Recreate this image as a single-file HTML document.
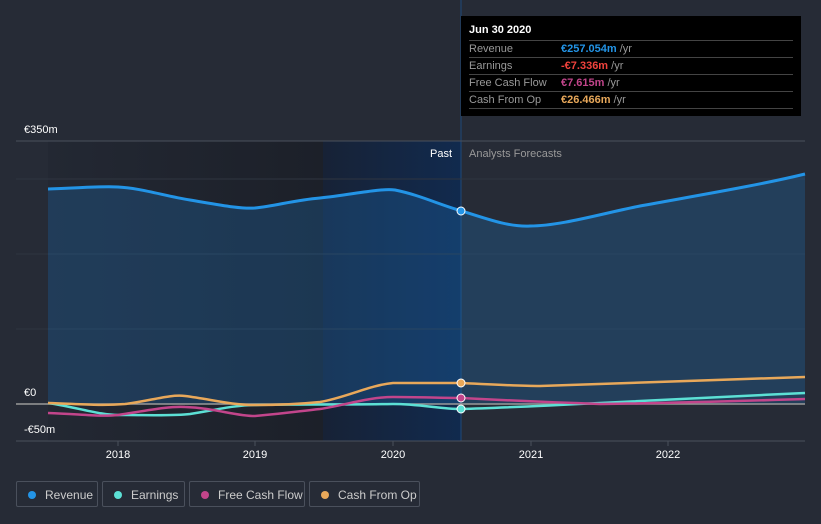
<!DOCTYPE html>
<html><head><meta charset="utf-8"><style>
body{margin:0;width:821px;height:524px;background:#262b36;font-family:"Liberation Sans",sans-serif;overflow:hidden;position:relative}
.tt{position:absolute;left:461px;top:16px;width:340px;height:100px;background:#000;color:#fff;font-size:11px}
.tt .h{position:absolute;left:8px;top:8px;font-weight:bold}
.row{position:absolute;left:8px;width:324px;border-top:1px solid #444;height:16px;line-height:17px;color:#999}
.row span{position:absolute;left:92px}
.leg{position:absolute;top:481px;height:26px;border:1px solid #4a505c;border-radius:2px;color:#ccc;font-size:12px;line-height:26px;box-sizing:border-box}
.leg i{position:absolute;left:11px;top:9px;width:8px;height:8px;border-radius:50%}
.leg b{font-weight:normal;position:absolute;left:28px}
</style></head><body>
<svg width="821" height="524" style="position:absolute;left:0;top:0">
<defs><linearGradient id="pg" x1="0" x2="1"><stop offset="0" stop-color="#232833"/><stop offset="1" stop-color="#1c2029"/></linearGradient>
<linearGradient id="bg2" x1="0" x2="1"><stop offset="0" stop-color="#172236"/><stop offset="1" stop-color="#112a4e"/></linearGradient></defs>
<rect x="48" y="141" width="275" height="300" fill="url(#pg)"/>
<rect x="323" y="141" width="138" height="300" fill="url(#bg2)"/>
<line x1="461" y1="0" x2="461" y2="441" stroke="#1e4a7a" stroke-width="1"/>
<line x1="16" y1="141" x2="805" y2="141" stroke="#4a505c"/>
<line x1="16" y1="179" x2="805" y2="179" stroke="#2f3540"/>
<line x1="16" y1="254" x2="805" y2="254" stroke="#2f3540"/>
<line x1="16" y1="329" x2="805" y2="329" stroke="#2f3540"/>
<line x1="16" y1="441" x2="805" y2="441" stroke="#4a505c"/>
<path d="M48,189 C80,188 100,186 118,187 C140,188 165,196 190,200 C220,205 240,209 255,208 C275,206 295,200 320,198 C350,195 380,188 395,190 C420,195 440,205 462,211 C490,220 510,227 530,226 C560,226 600,214 640,206 C700,195 760,185 805,174 L805,404 L48,404Z" fill="#1f6cb3" fill-opacity="0.3"/>
<path d="M48,189 C80,188 100,186 118,187 C140,188 165,196 190,200 C220,205 240,209 255,208 C275,206 295,200 320,198 C350,195 380,188 395,190 C420,195 440,205 462,211 C490,220 510,227 530,226 C560,226 600,214 640,206 C700,195 760,185 805,174" fill="none" stroke="#2394e6" stroke-width="3"/>
<line x1="16" y1="404" x2="805" y2="404" stroke="#999" stroke-width="1.5"/>
<path d="M48,403 C80,408 100,415 118,415 C150,415 175,416 190,414 C215,410 235,405 255,405 C280,404 340,405 393,404 C420,404 440,409 461,409 C500,408 540,406 600,403 C680,399 740,396 805,393" fill="none" stroke="#5ce0d5" stroke-width="2.5"/>
<path d="M48,413 C80,414 100,417 118,415 C150,410 170,406 185,407 C215,408 235,416 255,416 C290,413 300,411 320,409 C345,405 370,397 393,397 C420,397 440,398 461,398 C500,400 540,402 600,404 C680,403 740,401 805,399" fill="none" stroke="#c2458b" stroke-width="2.5"/>
<path d="M48,403 C80,404 100,406 125,404 C150,401 170,394 185,396 C210,399 230,405 255,405 C280,405 300,404 320,402 C345,398 370,385 393,383 C420,383 440,383 461,383 C500,385 520,386 540,386 C600,384 680,381 805,377" fill="none" stroke="#e8a85a" stroke-width="2.5"/>
<circle cx="461" cy="211" r="4" fill="#2394e6" stroke="#fff" stroke-width="1"/>
<circle cx="461" cy="383" r="4" fill="#e8a85a" stroke="#fff" stroke-width="1"/>
<circle cx="461" cy="398" r="4" fill="#c2458b" stroke="#fff" stroke-width="1"/>
<circle cx="461" cy="409" r="4" fill="#5ce0d5" stroke="#fff" stroke-width="1"/>
<g stroke="#4a505c"><line x1="118" y1="441" x2="118" y2="446"/><line x1="255" y1="441" x2="255" y2="446"/><line x1="393" y1="441" x2="393" y2="446"/><line x1="531" y1="441" x2="531" y2="446"/><line x1="668" y1="441" x2="668" y2="446"/></g>
<g font-size="11" fill="#fff" font-family="Liberation Sans,sans-serif">
<text x="24" y="133">€350m</text><text x="24" y="396">€0</text><text x="24" y="433">-€50m</text>
<text x="430" y="157">Past</text><text x="469" y="157" fill="#999">Analysts Forecasts</text>
<g text-anchor="middle"><text x="118" y="458">2018</text><text x="255" y="458">2019</text><text x="393" y="458">2020</text><text x="531" y="458">2021</text><text x="668" y="458">2022</text></g>
</g></svg>
<div class="tt"><div class="h">Jun 30 2020</div>
<div class="row" style="top:24px">Revenue<span><b style="color:#2394e6">€257.054m</b> /yr</span></div>
<div class="row" style="top:41px">Earnings<span><b style="color:#f0423c">-€7.336m</b> /yr</span></div>
<div class="row" style="top:58px">Free Cash Flow<span><b style="color:#c2458b">€7.615m</b> /yr</span></div>
<div class="row" style="top:75px;border-bottom:1px solid #444">Cash From Op<span><b style="color:#e8a85a">€26.466m</b> /yr</span></div>
</div>
<div class="leg" style="left:16px;width:82px"><i style="background:#2394e6"></i><b>Revenue</b></div>
<div class="leg" style="left:102px;width:83px"><i style="background:#5ce0d5"></i><b>Earnings</b></div>
<div class="leg" style="left:189px;width:116px"><i style="background:#c2458b"></i><b>Free Cash Flow</b></div>
<div class="leg" style="left:309px;width:111px"><i style="background:#e8a85a"></i><b>Cash From Op</b></div>
</body></html>
